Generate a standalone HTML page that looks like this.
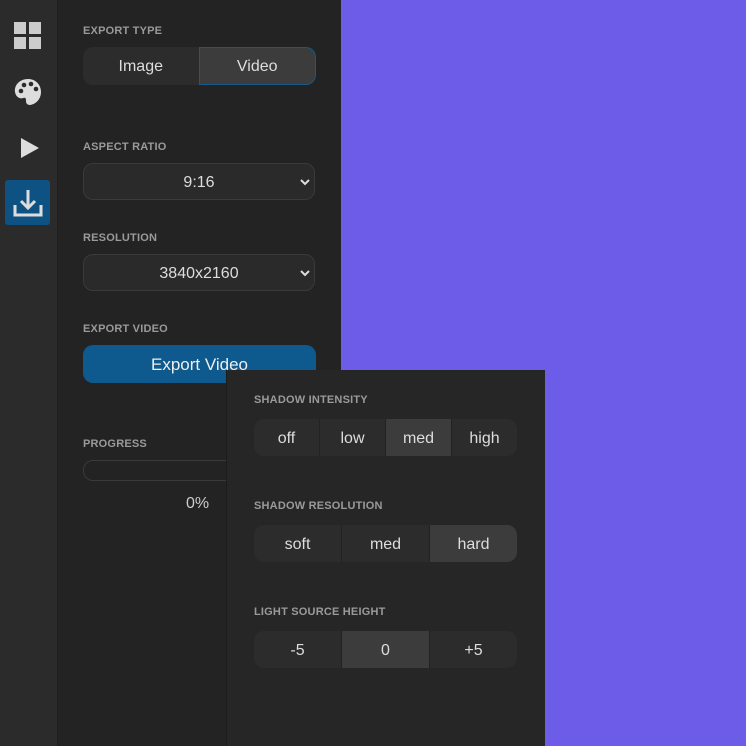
<!DOCTYPE html><html><head><style>
*{box-sizing:border-box;margin:0;padding:0}
body{width:746px;height:746px;overflow:hidden;background:#6c5ce7;font-family:"Liberation Sans",sans-serif;position:relative}
.side{position:absolute;left:0;top:0;width:58px;height:746px;background:#2b2b2b;border-right:1px solid #1f1f1f}
.panel{position:absolute;left:58px;top:0;width:283px;height:746px;background:#232323}
.lab{position:absolute;font-size:11px;font-weight:bold;color:#9a9a9a;letter-spacing:0.2px}
.seg{position:absolute;display:flex;border-radius:10px;overflow:hidden;background:#2c2c2c}
.seg div{flex:1;display:flex;align-items:center;justify-content:center;color:#ddd;font-size:16px;border-left:1px solid #222;padding-top:2px}
.seg div:first-child{border-left:none}
.seg .on{background:#3c3c3c}
.sel{position:absolute;left:83px;width:232px;height:37px;border:1px solid #3a3a3a;border-radius:10px;background:#2a2a2a;color:#ddd;font-size:16px;display:flex;align-items:center;justify-content:center;padding-top:2px}
.sel svg{position:absolute;right:4px;top:15px}
.ov{position:absolute;left:226px;top:370px;width:319px;height:376px;background:#262626;border-left:1px solid #1c1c1c}
</style></head><body>
<div class="side">
<svg style="position:absolute;left:14px;top:22px" width="28" height="28"><rect x="0" y="0" width="12" height="12" fill="#ccc"/><rect x="15" y="0" width="12" height="12" fill="#ccc"/><rect x="0" y="15" width="12" height="12" fill="#ccc"/><rect x="15" y="15" width="12" height="12" fill="#ccc"/></svg>
<svg style="position:absolute;left:14px;top:78px" width="28" height="28" viewBox="0 0 28 28"><path d="M14 1C6 1 0 7 1 14c1 6 6 7 8 6 3-1 3 1 3 3 0 3 2 4 4 4 7-1 11-7 11-13C27 6 21 1 14 1z" fill="#ddd"/><circle cx="7" cy="13" r="2.3" fill="#2b2b2b"/><circle cx="10" cy="7" r="2.3" fill="#2b2b2b"/><circle cx="17" cy="6" r="2.3" fill="#2b2b2b"/><circle cx="22" cy="11" r="2.3" fill="#2b2b2b"/></svg>
<svg style="position:absolute;left:20px;top:137px" width="20" height="22"><path d="M1 1L19 11L1 21Z" fill="#ddd"/></svg>
<div style="position:absolute;left:5px;top:180px;width:45px;height:45px;background:#0e5283;border-radius:3px"></div>
<svg style="position:absolute;left:13px;top:188px" width="30" height="30" viewBox="0 0 30 30" fill="none" stroke="#ddd" stroke-width="3"><path d="M2 17v10h26V17"/><path d="M15 2v18M8 13l7 7 7-7"/></svg>
</div>
<div class="panel"></div>
<div class="lab" style="left:83px;top:25px">EXPORT TYPE</div>
<div class="seg" style="left:83px;top:47px;width:233px;height:38px"><div>Image</div><div class="on" style="border:1px solid #155a8a;border-radius:0 10px 10px 0">Video</div></div>
<div class="lab" style="left:83px;top:141px">ASPECT RATIO</div>
<div class="sel" style="top:163px">9:16<svg width="10" height="8"><path d="M1 1l4 4 4-4" stroke="#ddd" stroke-width="2" fill="none"/></svg></div>
<div class="lab" style="left:83px;top:232px">RESOLUTION</div>
<div class="sel" style="top:254px">3840x2160<svg width="10" height="8"><path d="M1 1l4 4 4-4" stroke="#ddd" stroke-width="2" fill="none"/></svg></div>
<div class="lab" style="left:83px;top:323px">EXPORT VIDEO</div>
<div style="position:absolute;left:83px;top:345px;width:233px;height:38px;background:#0e5a8e;border-radius:10px;color:#eee;font-size:17px;display:flex;align-items:center;justify-content:center;padding-top:2px">Export Video</div>
<div class="lab" style="left:83px;top:438px">PROGRESS</div>
<div style="position:absolute;left:83px;top:460px;width:233px;height:21px;border:1px solid #3a3a3a;border-radius:10px"></div>
<div style="position:absolute;left:186px;top:495px;color:#ccc;font-size:16px">0%</div>
<div class="ov"></div>
<div class="lab" style="left:254px;top:394px">SHADOW INTENSITY</div>
<div class="seg" style="left:254px;top:419px;width:263px;height:37px"><div>off</div><div>low</div><div class="on">med</div><div>high</div></div>
<div class="lab" style="left:254px;top:500px">SHADOW RESOLUTION</div>
<div class="seg" style="left:254px;top:525px;width:263px;height:37px"><div>soft</div><div>med</div><div class="on">hard</div></div>
<div class="lab" style="left:254px;top:606px">LIGHT SOURCE HEIGHT</div>
<div class="seg" style="left:254px;top:631px;width:263px;height:37px"><div>-5</div><div class="on">0</div><div>+5</div></div>
</body></html>
